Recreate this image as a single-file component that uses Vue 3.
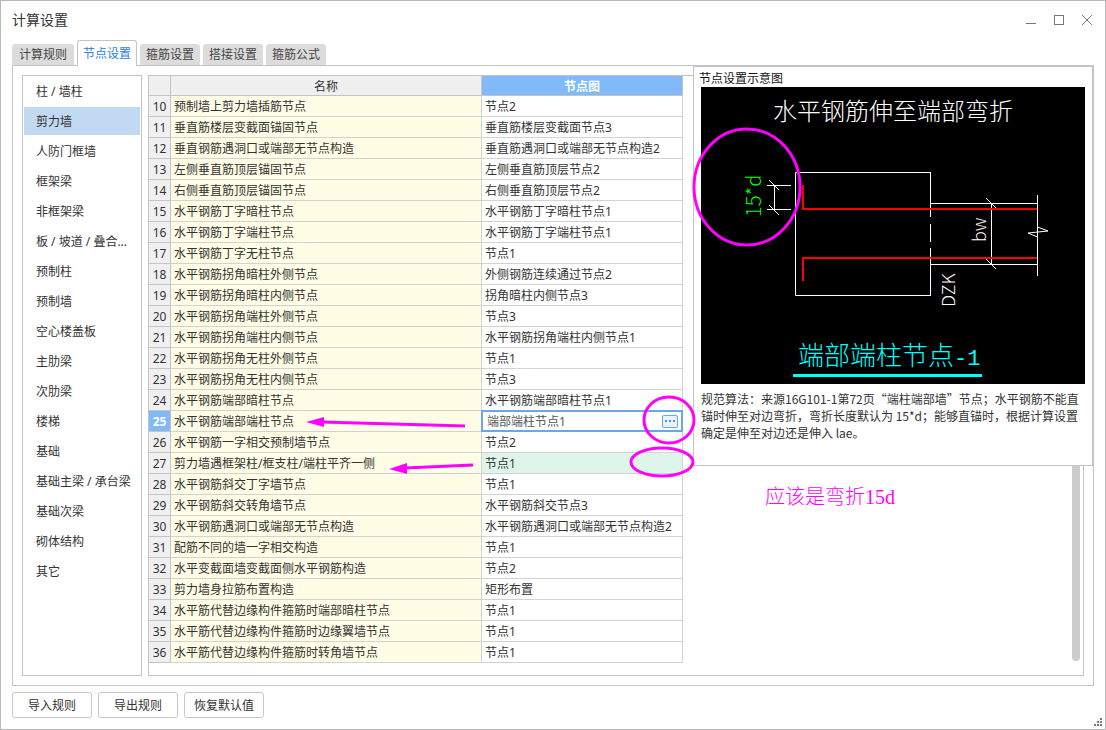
<script setup>
import { ref } from 'vue'

const tabs = ['计算规则', '节点设置', '箍筋设置', '搭接设置', '箍筋公式']
const activeTab = ref(1)

const members = [
  '柱 / 墙柱', '剪力墙', '人防门框墙', '框架梁', '非框架梁', '板 / 坡道 / 叠合...', '预制柱', '预制墙',
  '空心楼盖板', '主肋梁', '次肋梁', '楼梯', '基础', '基础主梁 / 承台梁', '基础次梁', '砌体结构', '其它'
]
const activeMember = ref(1)

const rows = [
  [10, '预制墙上剪力墙插筋节点', '节点2'],
  [11, '垂直筋楼层变截面锚固节点', '垂直筋楼层变截面节点3'],
  [12, '垂直钢筋遇洞口或端部无节点构造', '垂直筋遇洞口或端部无节点构造2'],
  [13, '左侧垂直筋顶层锚固节点', '左侧垂直筋顶层节点2'],
  [14, '右侧垂直筋顶层锚固节点', '右侧垂直筋顶层节点2'],
  [15, '水平钢筋丁字暗柱节点', '水平钢筋丁字暗柱节点1'],
  [16, '水平钢筋丁字端柱节点', '水平钢筋丁字端柱节点1'],
  [17, '水平钢筋丁字无柱节点', '节点1'],
  [18, '水平钢筋拐角暗柱外侧节点', '外侧钢筋连续通过节点2'],
  [19, '水平钢筋拐角暗柱内侧节点', '拐角暗柱内侧节点3'],
  [20, '水平钢筋拐角端柱外侧节点', '节点3'],
  [21, '水平钢筋拐角端柱内侧节点', '水平钢筋拐角端柱内侧节点1'],
  [22, '水平钢筋拐角无柱外侧节点', '节点1'],
  [23, '水平钢筋拐角无柱内侧节点', '节点3'],
  [24, '水平钢筋端部暗柱节点', '水平钢筋端部暗柱节点1'],
  [25, '水平钢筋端部端柱节点', '端部端柱节点1'],
  [26, '水平钢筋一字相交预制墙节点', '节点2'],
  [27, '剪力墙遇框架柱/框支柱/端柱平齐一侧', '节点1'],
  [28, '水平钢筋斜交丁字墙节点', '节点1'],
  [29, '水平钢筋斜交转角墙节点', '水平钢筋斜交节点3'],
  [30, '水平钢筋遇洞口或端部无节点构造', '水平钢筋遇洞口或端部无节点构造2'],
  [31, '配筋不同的墙一字相交构造', '节点1'],
  [32, '水平变截面墙变截面侧水平钢筋构造', '节点2'],
  [33, '剪力墙身拉筋布置构造', '矩形布置'],
  [34, '水平筋代替边缘构件箍筋时端部暗柱节点', '节点1'],
  [35, '水平筋代替边缘构件箍筋时边缘翼墙节点', '节点1'],
  [36, '水平筋代替边缘构件箍筋时转角墙节点', '节点1']
]
const editing = 25
const changed = 27
const edited = ref('端部端柱节点1')
</script>

<template>
  <div class="window" lang="zh-CN">
    <header class="titlebar">
      <h1>计算设置</h1>
      <div class="controls">
        <button aria-label="最小化"><svg width="12" height="12"><path d="M1 9.5H11" /></svg></button>
        <button aria-label="最大化"><svg width="12" height="12"><rect x="1.5" y="1.5" width="9" height="9" /></svg></button>
        <button aria-label="关闭"><svg width="12" height="12"><path d="M1 1L11 11M11 1L1 11" /></svg></button>
      </div>
    </header>

    <nav class="tabs" role="tablist">
      <button v-for="(t, i) in tabs" :key="t" role="tab" :aria-selected="i === activeTab"
        :class="{ active: i === activeTab }" @click="activeTab = i">{{ t }}</button>
    </nav>

    <main class="panel">
      <ul class="members">
        <li v-for="(m, i) in members" :key="m">
          <button :class="{ active: i === activeMember }" @click="activeMember = i">{{ m }}</button>
        </li>
      </ul>

      <section class="grid">
        <table>
          <colgroup><col class="c-no"><col class="c-name"><col class="c-node"></colgroup>
          <thead>
            <tr><th></th><th>名称</th><th class="picked">节点图</th></tr>
          </thead>
          <tbody>
            <tr v-for="[no, name, node] in rows" :key="no">
              <th scope="row" :class="{ picked: no === editing }">{{ no }}</th>
              <td class="name">{{ name }}</td>
              <td :class="{ changed: no === changed, editing: no === editing }">
                <div v-if="no === editing" class="editor">
                  <input v-model="edited" type="text" :aria-label="name">
                  <button aria-label="选择节点图">
                    <svg width="14" height="11"><path d="M2 4h2v2H2zM6 4h2v2H6zM10 4h2v2h-2z" /></svg>
                  </button>
                </div>
                <template v-else>{{ node }}</template>
              </td>
            </tr>
          </tbody>
        </table>
        <div class="scrollbar"></div>
      </section>

      <aside class="preview">
        <h2>节点设置示意图</h2>
        <svg class="drawing" viewBox="0 0 384 297" role="img" aria-label="端部端柱节点-1">
          <rect width="384" height="297" fill="#000" />
          <text x="72" y="33" class="cad" font-size="24" fill="#fff">水平钢筋伸至端部弯折</text>
          <g class="thin">
            <path d="M229.5 85.5H94.5V208.5H229.5" />
            <path d="M229.5 85V130M229.5 137V155M229.5 161V209" />
            <path d="M230 116.5H336M230 177.5H336M336.5 108V189" />
            <path d="M290.5 116V178M285 111L295 121M285 172L295 182" />
            <path d="M66 98.5H90M66 122.5H90M73.5 98V123M68 93L78 103M68 118L78 128" />
            <path d="M336.5 140L347 144L327 146L336.5 150" />
          </g>
          <path d="M102 98V122H336M102 194V171H336" fill="none" stroke="#f00" stroke-width="2" />
          <text transform="translate(60 130) rotate(-90)" class="cad" font-size="20" fill="#0f0">15*d</text>
          <text transform="translate(285 155) rotate(-90)" class="cad" font-size="18" fill="#fff">bw</text>
          <text transform="translate(254 220) rotate(-90)" class="cad" font-size="18" fill="#fff">DZK</text>
          <text x="97" y="278" class="cad" font-size="26" fill="#0ff">端部端柱节点<tspan class="mono" font-size="22">-1</tspan></text>
          <rect x="92" y="287" width="189" height="3" fill="#0ff" />
        </svg>
        <p>规范算法：来源16G101-1第72页“端柱端部墙”节点；水平钢筋不能直锚时伸至对边弯折，弯折长度默认为 15*d；能够直锚时，根据计算设置确定是伸至对边还是伸入 lae。</p>
      </aside>
    </main>

    <footer class="actions">
      <button>导入规则</button>
      <button>导出规则</button>
      <button>恢复默认值</button>
    </footer>

    <svg class="grip" width="8" height="8" aria-hidden="true">
      <path d="M6 0h2v2H6zM3 3h2v2H3zM6 3h2v2H6zM0 6h2v2H0zM3 6h2v2H3zM6 6h2v2H6z" />
    </svg>

    <svg class="markup" width="1106" height="730">
      <g fill="none" stroke="#f0f" stroke-width="3">
        <ellipse cx="747" cy="187" rx="53" ry="58" />
        <ellipse cx="669" cy="420" rx="25" ry="23" />
        <ellipse cx="662" cy="462" rx="31" ry="14" />
        <path d="M322 422L465 426M405 468L473 465" />
      </g>
      <path d="M306 422L324 417V427ZM389 469L407 463V474Z" fill="#f0f" />
      <text x="765" y="504" class="note">应该是弯折15d</text>
    </svg>
  </div>
</template>

<style>
body { background: #fff; }
</style>

<style scoped>
* { box-sizing: border-box; }
.window {
  position: relative;
  display: flex;
  flex-direction: column;
  min-height: 100vh;
  padding: 0 11px 11px;
  border: 1px solid #b8b8b8;
  background: #fff;
  color: #333;
  font: 12px/20px "Noto Sans", "Noto Sans CJK SC", sans-serif;
}
button { padding: 0; border: 0; background: none; color: inherit; font: inherit; }
h1, h2, p, ul { margin: 0; padding: 0; font-weight: normal; }
ul { list-style: none; }

.titlebar { display: flex; justify-content: space-between; align-items: center; height: 39px; padding: 0 1px 2px 0; }
h1 { font-size: 14px; }
.controls { display: flex; gap: 16px; }
.controls button { display: flex; }
.controls svg { fill: none; stroke: #777; }

.tabs { display: flex; align-items: flex-end; gap: 3px; height: 26px; margin-bottom: -1px; z-index: 1; }
.tabs button {
  width: 60px;
  height: 21px;
  margin-bottom: 1px;
  border-radius: 3px 3px 0 0;
  background: #dcdcdc;
  color: #444;
}
.tabs button:first-child { width: 62px; }
.tabs .active {
  height: 26px;
  margin-bottom: 0;
  border: 1px solid #c4c4c4;
  border-bottom: 0;
  background: #fff;
  color: #2a7fe0;
}

.panel {
  position: relative;
  display: flex;
  flex: 1;
  gap: 6px;
  padding: 9px;
  border: 1px solid #c4c4c4;
}
.members { flex: none; width: 120px; padding: 1px; border: 1px solid #c4c4c4; }
.members li { margin-bottom: 2px; }
.members button { display: block; width: 100%; height: 28px; padding: 2px 0 0 12px; text-align: left; white-space: nowrap; }
.members .active { background: #c1d9f1; }

.grid { display: flex; flex: 1; justify-content: space-between; padding-right: 3px; border: 1px solid #c4c4c4; }
table { align-self: flex-start; table-layout: fixed; width: 534px; border-collapse: separate; border-spacing: 0; }
.c-no { width: 22px; }
.c-name { width: 311px; }
.c-node { width: 201px; }
th, td { height: 21px; padding: 2px 3px 0; border: solid #d2d2d2; border-width: 0 1px 1px 0; line-height: 18px; text-align: left; font-weight: normal; white-space: nowrap; }
thead th { height: 20px; line-height: 17px; border-color: #c4c4c4; background: #f0f0f0; text-align: center; }
tbody th { padding: 2px 0 0; border-color: #c4c4c4; background: #f0f0f0; text-align: center; }
.name { background: #fffde6; }
th.picked { background: #80bafa; color: #fff; font-weight: bold; }
.changed { background: #def6ea; }
.editing { position: relative; }
.editor {
  position: absolute;
  inset: -1px;
  display: flex;
  align-items: center;
  padding-right: 3px;
  border: 2px solid #6ba7e8;
  background: #fff;
}
.editor input { flex: 1; min-width: 0; height: 18px; padding: 2px 0 0 4px; border: 0; outline: 0; background: none; color: #555; font: inherit; }
.editor button { display: flex; border: 1px solid #6ba7e8; border-radius: 2px; background: #eaf2fb; }
.editor svg { fill: #4a90e0; }
.scrollbar { width: 8px; margin-bottom: 14px; border-radius: 4px; background: #cbcbcb; }

.preview {
  position: absolute;
  top: -1px;
  right: -1px;
  width: 401px;
  height: 401px;
  padding: 3px 7px;
  border: solid #c4c4c4;
  border-width: 2px 2px 1px 1px;
  background: #fff;
}
h2 { margin-left: -2px; color: #111; font-size: 12px; line-height: 17px; }
.drawing { display: block; width: 384px; height: 297px; }
.thin { fill: none; stroke: #fff; stroke-width: 1; }
.cad { font-family: "Noto Sans CJK SC", sans-serif; font-weight: 300; }
.mono { font-family: "Liberation Mono", monospace; }
.preview p { width: 384px; margin-top: 6px; font-family: "Noto Sans CJK SC", sans-serif; line-height: 17px; }

.actions { display: flex; gap: 6px; margin-top: 6px; }
.actions button { width: 80px; height: 26px; padding-top: 2px; border: 1px solid #c8c8c8; border-radius: 3px; }
.grip { position: absolute; right: 3px; bottom: 3px; fill: #777a80; }
.markup { position: absolute; top: -1px; left: -1px; pointer-events: none; z-index: 2; }
.note { fill: #f0f; font: 300 20px "Liberation Serif", "Noto Sans CJK SC", serif; }
</style>
